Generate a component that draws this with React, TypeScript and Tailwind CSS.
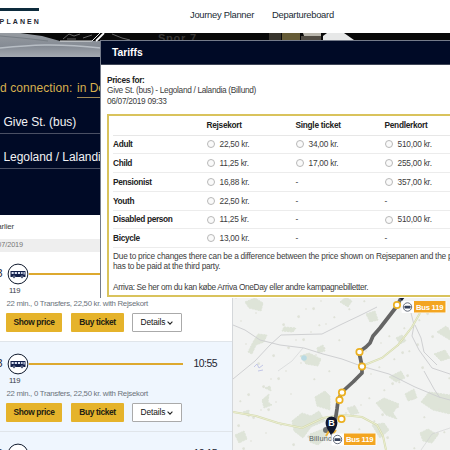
import React from "react";

type Tariff = { label: string; prices: (string | null)[] };

const tariffs: Tariff[] = [
  { label: "Adult", prices: ["22,50 kr.", "34,00 kr.", "510,00 kr."] },
  { label: "Child", prices: ["11,25 kr.", "17,00 kr.", "255,00 kr."] },
  { label: "Pensionist", prices: ["16,88 kr.", null, "357,00 kr."] },
  { label: "Youth", prices: ["22,50 kr.", null, null] },
  { label: "Disabled person", prices: ["11,25 kr.", null, "510,00 kr."] },
  { label: "Bicycle", prices: ["13,00 kr.", null, null] },
];

function Header() {
  return (
    <header className="relative flex h-[33px] items-start bg-white">
      <div className="h-full w-[190px] pt-2">
        <div className="h-[3px] w-[39px] bg-[#0d2b3c]" />
        <div className="flex w-[41px] justify-end whitespace-nowrap pt-[5px] text-[7px] font-bold leading-[12px] tracking-[2.1px] text-[#1d2733]">
          REJSEPLANEN
        </div>
      </div>
      <nav className="flex gap-[18px] whitespace-nowrap pt-[7px] text-[9.4px] leading-4 tracking-[-0.28px] text-[#222b35]">
        <a>Journey Planner</a>
        <a>Departureboard</a>
      </nav>
    </header>
  );
}

function Hero() {
  return (
    <svg className="block h-[24px] w-[450px]" viewBox="0 0 450 24">
      <defs>
        <linearGradient id="train" x1="0" y1="0" x2="0" y2="1">
          <stop offset="0" stopColor="#969ba1" />
          <stop offset="0.55" stopColor="#858b94" />
          <stop offset="1" stopColor="#a3a9b1" />
        </linearGradient>
      </defs>
      <rect width="450" height="24" fill="#090909" />
      <path d="M0 0H20L42 3L60 8H101V24H0Z" fill="url(#train)" />
      <path d="M0 15C30 12 55 10 101 15" stroke="#b8bec5" strokeWidth="1.5" fill="none" />
      <path d="M0 3L22 5L48 8" stroke="#777e85" strokeWidth="1.2" fill="none" />
      <path d="M60 8H92L100 0" stroke="#e5e7e8" strokeWidth="1" fill="none" />
      <path d="M96 8L104 0" stroke="#fff" strokeWidth="1.8" />
      <path d="M63 6L69 1L74 3L80 1M67 6H76M83 5L92 2M112 1L122 5L130 7" stroke="#666" strokeWidth="1" fill="none" />
      <text x="158" y="9" fontSize="11" fontFamily="Liberation Sans" fontWeight="bold" fill="#383634" textLength="38">Spor 7</text>
      <rect x="269" width="12" height="8" fill="#37342c" />
      <rect x="282" width="18" height="8" fill="#655b36" />
      <rect x="301" y="3" width="20" height="5" fill="#504b43" />
      <path d="M303 0H321V3H304Z" fill="#b9b6ad" />
      <path d="M323 8V3L327 0H344L354 7V8Z" fill="#e7e8e8" />
    </svg>
  );
}

function SearchPanel() {
  return (
    <section className="h-[158px] overflow-hidden whitespace-nowrap bg-[#000a26] pt-[22px]">
      <div className="flex w-[101px] text-[12px] leading-[18px] text-[#d8b04e]">
        <span className="w-[77px] shrink-0 tracking-[0.08px]">d connection:</span>
        <span className="h-[19px] border-b border-[#a08a55]">in Denmark</span>
      </div>
      <div className="mt-[11px] h-[25px] border-b border-[#4a5064] pl-[3.5px] pt-[4px] text-[12px] leading-[18px] tracking-[-0.05px] text-[#f2f2f4]">Give St. (bus)</div>
      <div className="h-[35px] border-b border-[#4a5064] pl-[3.5px] pt-[14px] text-[12px] leading-[18px] tracking-[-0.05px] text-[#f2f2f4]">Legoland / Lalandia</div>
    </section>
  );
}

function BusIcon() {
  return (
    <svg className="h-[22px] w-[22px] shrink-0" viewBox="0 0 22 22">
      <circle cx="11" cy="11" r="9.9" fill="#fff" stroke="#111b2e" strokeWidth="1" />
      <rect x="3.5" y="8" width="15" height="6" rx="0.6" fill="#13204a" />
      <path d="M4.6 8.9h2.1v2H4.6zM7.7 8.9h2.2v2H7.7zM10.9 8.9h2.2v2h-2.2zM14.1 8.9h1.5v2h-1.5zM16.5 8.9h1.2v2.6h-1.2z" fill="#dce3f5" />
      <circle cx="7" cy="14" r="1.2" fill="#13204a" stroke="#fff" strokeWidth=".4" />
      <circle cx="15" cy="14" r="1.2" fill="#13204a" stroke="#fff" strokeWidth=".4" />
    </svg>
  );
}

function Journey({ arrive, tinted }: { arrive: string; tinted?: boolean }) {
  return (
    <article className={"h-[90px] shrink-0 overflow-hidden whitespace-nowrap border-b border-[#e0e5ea] pt-[11px] " + (tinted ? "bg-[#eff6fe]" : "bg-white")}>
      <div className="flex h-[22px] items-center text-[10.4px] tracking-[-0.5px] text-[#1c2430]">
        <div className="flex w-[7px] shrink-0 justify-end overflow-hidden pr-[5px]">09:33</div>
        <BusIcon />
        <div className="h-[2.5px] w-[153.5px] bg-[#dda92f]" />
        <div className="ml-[11px] leading-4">{arrive}</div>
      </div>
      <div className="ml-[9px] mt-[1px] text-[7.6px] leading-[10px] tracking-[-0.3px] text-[#333b47]">119</div>
      <div className="ml-[6.5px] mt-[3px] text-[7.8px] leading-[10px] tracking-[-0.28px] text-[#6b727b]">22 min., 0 Transfers, 22,50 kr. with Rejsekort</div>
      <div className="ml-[6px] mt-[4px] flex text-[8.4px] font-bold leading-[19px] tracking-[-0.36px] text-[#222013]">
        <button className="h-[19px] w-[56px] rounded-[1px] bg-[#e5b32b]">Show price</button>
        <button className="ml-[9px] h-[19px] w-[53px] rounded-[1px] bg-[#e5b32b]">Buy ticket</button>
        <button className="ml-[8px] flex h-[19px] w-[50px] items-center justify-center gap-[2px] rounded-[1px] border border-[#aaa] bg-white font-normal tracking-[-0.1px] text-[#111]">
          Details
          <svg className="h-[6px] w-[6px]" viewBox="0 0 6 6" fill="none" stroke="#222" strokeWidth="1.1"><path d="M.6 1.7L3 4.1L5.4 1.7" /></svg>
        </button>
      </div>
    </article>
  );
}

const woods = [
  "M245 302l10-4 8 5-2 8-12-3z", "M253 342l5-8 9 1-3 7-8 3-4 9-4-2z", "M284 327l12 1-3 4-11-1z",
  "M300 356l9-3 12 6-3 7-12-2z", "M317 348l6-3 2 6-7 2z", "M262 400l7-6-1 8 4 3-8 3z", "M265 388l5-2 1 5z",
  "M315 397l10-6 5 5v14l-13-4z", "M292 421l10-8 9 3 8-5 6 10-14 6-8 11-9-7z", "M243 412l6-2v7z",
  "M235 435l9-4 3 8-8 4z", "M310 434l13-5 4 8-9 8-8-3z", "M340 302l6-5 6 4-4 6z", "M366 314l9-3 3 9-8 2z",
  "M389 377l12-6 4 7-9 4z", "M376 403l8-5 15 6-6 9 4 6-11-4z", "M405 394l9-5 3 9-9 3z",
  "M437 332l9-6 4 5v9z", "M434 354l11-4 5 8-9 3z", "M421 402l8-10 21 3v19l-17-4z", "M372 425l12-2 5 7-9 8z",
  "M420 433l8-4 10 6-6 8-9-2z", "M396 338l6-3 4 6-6 3z", "M347 408l8-2 4 7-8 2z", "M422 306l7-4 8 3-4 8z",
];
const specks = Array.from({ length: 90 }, (_, i) => ({ x: 235 + ((i * 73) % 214), y: 298 + ((i * 47 + (i % 7) * 11) % 151), r: 1 + (i % 3) * 0.6 }));
const stops = [[397, 305], [359.5, 352], [362, 366.5], [342, 392.5], [339.5, 400], [341.5, 419]];

function BusLabel({ x, y }: { x: number; y: number }) {
  return (
    <g>
      <rect x={x} y={y} width="45" height="12" rx="1" fill="#fff" fillOpacity=".9" />
      <rect x={x + 12.5} y={y} width="31.5" height="11.5" fill="#f3a521" />
      <circle cx={x + 6} cy={y + 6} r="4.2" fill="#fff" stroke="#40495b" strokeWidth=".8" />
      <rect x={x + 3} y={y + 4.7} width="6" height="2.7" rx=".5" fill="#37425b" />
      <text x={x + 14.5} y={y + 8.7} fontSize="7.7" fontWeight="bold" fontFamily="Liberation Sans, sans-serif" fill="#fff" textLength="27.5">Bus 119</text>
    </g>
  );
}

function RouteMap() {
  return (
    <svg className="h-[235px] w-[217px] shrink-0" viewBox="233 215 217 235">
      <rect x="233" y="215" width="217" height="235" fill="#f2f3f2" />
      <g fill="#dee4d8" stroke="#dee4d8" strokeLinejoin="round" strokeDasharray="2 1">{woods.map((d) => <path key={d} d={d} />)}</g>
      <g fill="#dfe2d8">{specks.map((s, i) => <path key={i} d={`M${s.x} ${s.y}l${s.r} -1 1 ${s.r}-${s.r} 1z`} />)}</g>
      <circle cx="304" cy="358" r="2.8" fill="#b9dae3" />
      <path d="M254 367l3-3 2 4 4-3M258 371l5-1" stroke="#c2c6e7" fill="none" />
      <g fill="none" stroke="#cfd0d2" strokeWidth="1">
        <path d="M233 325L245 330L260 340L280 345L304 348L323 354L342 359L361 366L389 374L415 387L439 397L450 400" />
        <path d="M233 379L255 361L270 345L281 335L322 334L340 325L361 315L377 307" />
        <path d="M410 309L414 325L412 336L419 350L432 368L450 374" />
        <path d="M415 325L421 338L424 352L437 365M424 371L434 389L440 398" />
        <path d="M303 348L292 361L278 371M450 428L432 434L421 450" strokeWidth=".6" />
      </g>
      <path d="M233 412L256 416L278 423L302 428L323 418L343 415L362 417L377 425L383 436L386 450M362 366L382 358L398 345L412 327L420 313" fill="none" stroke="#d3d9ae" strokeWidth="2" />
      <path d="M233 412L256 416L278 423L302 428L323 418L343 415L362 417L377 425L383 436L386 450M362 366L382 358L398 345L412 327L420 313" fill="none" stroke="#f1f3d8" strokeWidth=".8" />
      <path d="M401 298L397 306L380 328L373 336L370 343L366 347L359 352L362 366V373L353 382L342 392L338 401L337 409L335 422L331 431" fill="none" stroke="#656565" strokeWidth="3.7" strokeLinejoin="round" />
      {stops.map(([x, y]) => <circle key={`${x}-${y}`} cx={x} cy={y} r="3.2" fill="#fff" stroke="#ebb021" strokeWidth="1.7" />)}
      <circle cx="326" cy="430" r="3" fill="#707372" />
      <path d="M399 297H405L402 301Z" fill="#111b35" />
      <text x="309" y="441" fontFamily="Liberation Sans, sans-serif" fontSize="7.4" textLength="23" fill="#555d60">Billund</text>
      <path d="M326 436l3-5 4 3 3-4" stroke="#efb439" strokeWidth="2" fill="none" />
      <path d="M331.5 436C329 431 325.6 427.5 325.6 422.4A5.9 5.9 0 1 1 337.4 422.4C337.4 427.5 334 431 331.5 436Z" fill="#11172e" />
      <text x="331.5" y="426" fontFamily="Liberation Sans, sans-serif" fontSize="9" fontWeight="bold" textAnchor="middle" fill="#fff">B</text>
      <BusLabel x={401.5} y={301} />
      <BusLabel x={331.5} y={433.5} />
    </svg>
  );
}

function TariffDialog() {
  return (
    <div role="dialog" className="absolute left-[100px] top-[40px] h-[258px] w-[360px] overflow-hidden whitespace-nowrap border-l border-t border-[#747b8a] bg-white">
      <div className="h-[24px] border-b border-[#3f4657] bg-[#000a26] pl-[11px] text-[10.3px] font-bold leading-[24px] text-white">Tariffs</div>
      <div className="pl-[6px] pt-[9.5px] text-[8.3px] leading-[10.5px] tracking-[-0.31px] text-[#3c3c3c]">
        <div className="font-bold tracking-[-0.32px] text-[#222]">Prices for:</div>
        <div>Give St. (bus) - Legoland / Lalandia (Billund)</div>
        <div>06/07/2019 09:33</div>
        <div className="mt-[8px] h-[182.5px] w-[360px] border-2 border-[#d9c35c] pl-[4px]">
          <div className="grid h-[19.5px] grid-cols-[93.5px_89px_1fr] items-center border-b border-[#e7e7e7] font-bold tracking-[-0.28px] text-[#222]">
            <span className="col-start-2">Rejsekort</span>
            <div className="grid grid-cols-[89px_1fr]"><span>Single ticket</span><span>Pendlerkort</span></div>
          </div>
          {tariffs.map((row) => (
            <div key={row.label} className="grid h-[18.8px] grid-cols-[93.5px_89px_89px_1fr] items-center border-b border-[#ececec] tracking-[-0.22px]">
              <span className="font-bold tracking-[-0.33px] text-[#222]">{row.label}</span>
              {row.prices.map((price, index) => (
                <span key={index} className="flex items-center gap-[5px]">
                  {price ? <><i className="h-[8px] w-[8px] rounded-full border border-[#b8b8b8] bg-[#fafafa]" />{price}</> : "-"}
                </span>
              ))}
            </div>
          ))}
          <div className="pt-[2.5px] leading-[10.4px]">
            <div className="tracking-[-0.235px]">Due to price changes there can be a difference between the price shown on Rejsepanen and the price that</div>
            <div className="tracking-[-0.26px]">has to be paid at the third party.</div>
            <div className="mt-[10px] tracking-[-0.335px]">Arriva: Se her om du kan købe Arriva OneDay eller andre kampagnebilletter.</div>
          </div>
        </div>
      </div>
    </div>
  );
}

export default function App() {
  return (
    <main className="relative h-[450px] w-[450px] overflow-hidden bg-white font-['Liberation_Sans',Arial,sans-serif]">
      <Header />
      <Hero />
      <SearchPanel />
      <div className="flex h-[235px] overflow-hidden">
        <div className="flex w-[233px] shrink-0 flex-col overflow-hidden border-r border-[#d4d7da]">
          <div className="h-[24px] shrink-0 text-[8px] leading-[24px] tracking-[-0.15px] text-[#444]"><span className="-ml-[8px]">Earlier</span></div>
          <div className="flex h-[13px] w-[101px] shrink-0 items-center bg-[#eee] text-[7.3px] tracking-[-0.1px] text-[#777]"><span className="-ml-[12.5px]">06/07/2019</span></div>
          <Journey arrive="09:55" />
          <Journey arrive="10:55" tinted />
          <Journey arrive="12:15" tinted />
        </div>
        <RouteMap />
      </div>
      <TariffDialog />
    </main>
  );
}
